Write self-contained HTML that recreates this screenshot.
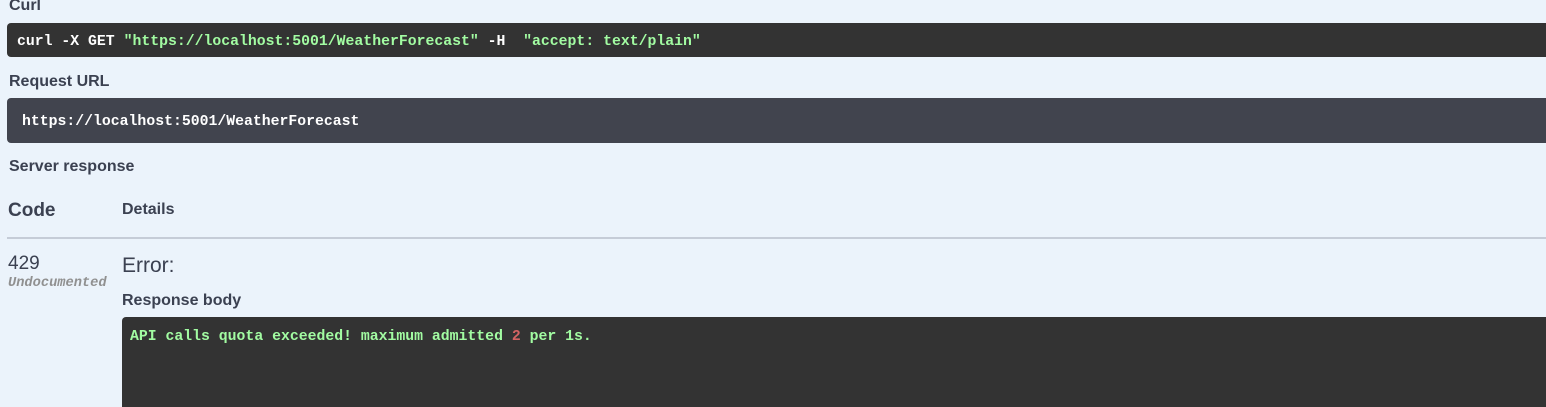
<!DOCTYPE html>
<html><head><meta charset="utf-8"><style>
html,body{margin:0;padding:0;}
body{width:1546px;height:403px;overflow:hidden;background:#ebf3fb;position:relative;font-family:"Liberation Sans",Arial,sans-serif;color:#3b4151;}
.a{position:absolute;white-space:pre;}
.lbl{font-size:16px;font-weight:bold;}
.box{position:absolute;left:7px;right:0;border-radius:4px 0 0 4px;}
.mono{font-family:"Liberation Mono",monospace;font-weight:bold;font-size:14.8px;color:#fff;}
.g{color:#a2fca2;}
</style></head><body>
<div class="a lbl" style="left:9px;top:-3px;">Curl</div>
<div class="box" style="top:23px;height:34px;background:#333;"></div>
<div class="a mono" style="left:17px;top:34px;">curl -X GET <span class="g">"https://localhost:5001/WeatherForecast"</span> -H  <span class="g">"accept: text/plain"</span></div>
<div class="a lbl" style="left:9px;top:73px;">Request URL</div>
<div class="box" style="top:98px;height:45px;background:#41444e;"></div>
<div class="a mono" style="left:22px;top:114px;">https://localhost:5001/WeatherForecast</div>
<div class="a lbl" style="left:9px;top:158px;">Server response</div>
<div class="a" style="left:8px;top:200px;font-size:19px;font-weight:bold;">Code</div>
<div class="a lbl" style="left:122px;top:201px;">Details</div>
<div style="position:absolute;left:7px;right:0;top:237px;height:2px;background:#c5ccd7;"></div>
<div class="a" style="left:8px;top:253px;font-size:19px;">429</div>
<div class="a" style="left:8px;top:276px;font-family:'Liberation Mono',monospace;font-style:italic;font-weight:bold;font-size:13.7px;color:#909090;">Undocumented</div>
<div class="a" style="left:122px;top:254px;font-size:21px;">Error:</div>
<div class="a lbl" style="left:122px;top:292px;">Response body</div>
<div style="position:absolute;left:122px;right:0;top:317px;height:90px;background:#333;border-radius:4px 0 0 0;"></div>
<div class="a mono g" style="left:130px;top:329px;">API calls quota exceeded! maximum admitted <span style="color:#d36363">2</span> per 1s.</div>
</body></html>
